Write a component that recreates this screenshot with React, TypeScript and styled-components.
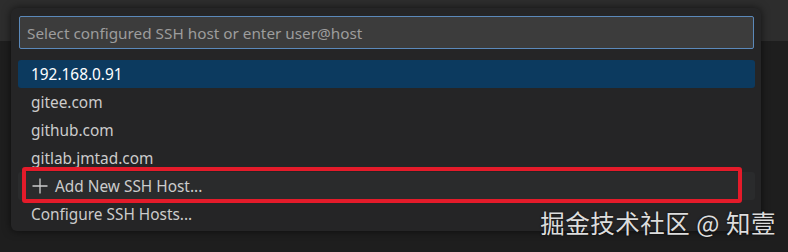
import React from 'react'
import styled, { createGlobalStyle } from 'styled-components'

const hosts = ['192.168.0.91', 'gitee.com', 'github.com', 'gitlab.jmtad.com']

export default () => (
  <>
    <GlobalStyle />
    <Page>
      <TopBar />
      <Editor />
      <QuickPick>
        <InputBox placeholder="Select configured SSH host or enter user@host" />
        <List>
          {hosts.map((h, i) => (
            <Row key={h} $selected={i === 0}>{h}</Row>
          ))}
          <Row $hover>
            <PlusIcon viewBox="0 0 16 16">
              <path d="M8 0.5v15M0.5 8h15" stroke="#cccccc" strokeWidth="1.3" fill="none" />
            </PlusIcon>
            Add New SSH Host...
            <Highlight />
          </Row>
          <Row>Configure SSH Hosts...</Row>
        </List>
      </QuickPick>
      <Watermark>掘金技术社区 @ 知壹</Watermark>
    </Page>
  </>
)

const GlobalStyle = createGlobalStyle`
  body {
    margin: 0;
    background: #1e1e1e;
    font-family: "Noto Sans", "Open Sans", sans-serif;
  }
`

const Page = styled.div`
  position: relative;
  width: 788px;
  height: 252px;
  overflow: hidden;
  display: grid;
  grid-template-rows: 41px 1fr;
`

const TopBar = styled.div`
  background: #2d2d2d;
`

const Editor = styled.div`
  background: #1e1e1e;
`

const QuickPick = styled.div`
  position: absolute;
  left: 11px;
  top: 8px;
  width: 750px;
  box-sizing: border-box;
  padding: 8px 6px 3px 7px;
  background: #252526;
  border-radius: 6px;
  box-shadow: 0 0 8px rgba(0, 0, 0, 0.6);
`

const InputBox = styled.input`
  display: block;
  box-sizing: border-box;
  width: calc(100% - 2px);
  height: 33px;
  margin: 0 1px;
  padding: 0 7px;
  background: #3c3c3c;
  border: 1px solid #5b89ba;
  border-radius: 2px;
  outline: none;
  color: #cccccc;
  font-family: "Noto Sans", "Open Sans", sans-serif;
  font-size: 15.3px;
  &::placeholder {
    color: #9d9d9d;
  }
`

const List = styled.div`
  margin-top: 11px;
  display: flex;
  flex-direction: column;
`

const Row = styled.div<{ $selected?: boolean; $hover?: boolean }>`
  position: relative;
  display: flex;
  align-items: center;
  height: 28px;
  padding-left: 13px;
  border-radius: 3px;
  font-size: 15.4px;
  color: ${p => (p.$selected ? '#ffffff' : '#cccccc')};
  background: ${p => (p.$selected ? '#0c3a5f' : p.$hover ? '#2a2b2c' : 'transparent')};
`

const PlusIcon = styled.svg`
  width: 16px;
  height: 16px;
  margin: 0 7px 0 1px;
`

const Highlight = styled.div`
  position: absolute;
  left: 4px;
  right: 13px;
  top: -5px;
  bottom: -3px;
  border: 4px solid #e41b2a;
  border-radius: 3px;
  pointer-events: none;
`

const Watermark = styled.div`
  position: absolute;
  right: 12px;
  bottom: 12px;
  font-family: "Noto Sans CJK SC", sans-serif;
  font-size: 24.5px;
  color: #dddddd;
  text-shadow: 0 0 2px rgba(0, 0, 0, 0.7);
  letter-spacing: 0.5px;
`
